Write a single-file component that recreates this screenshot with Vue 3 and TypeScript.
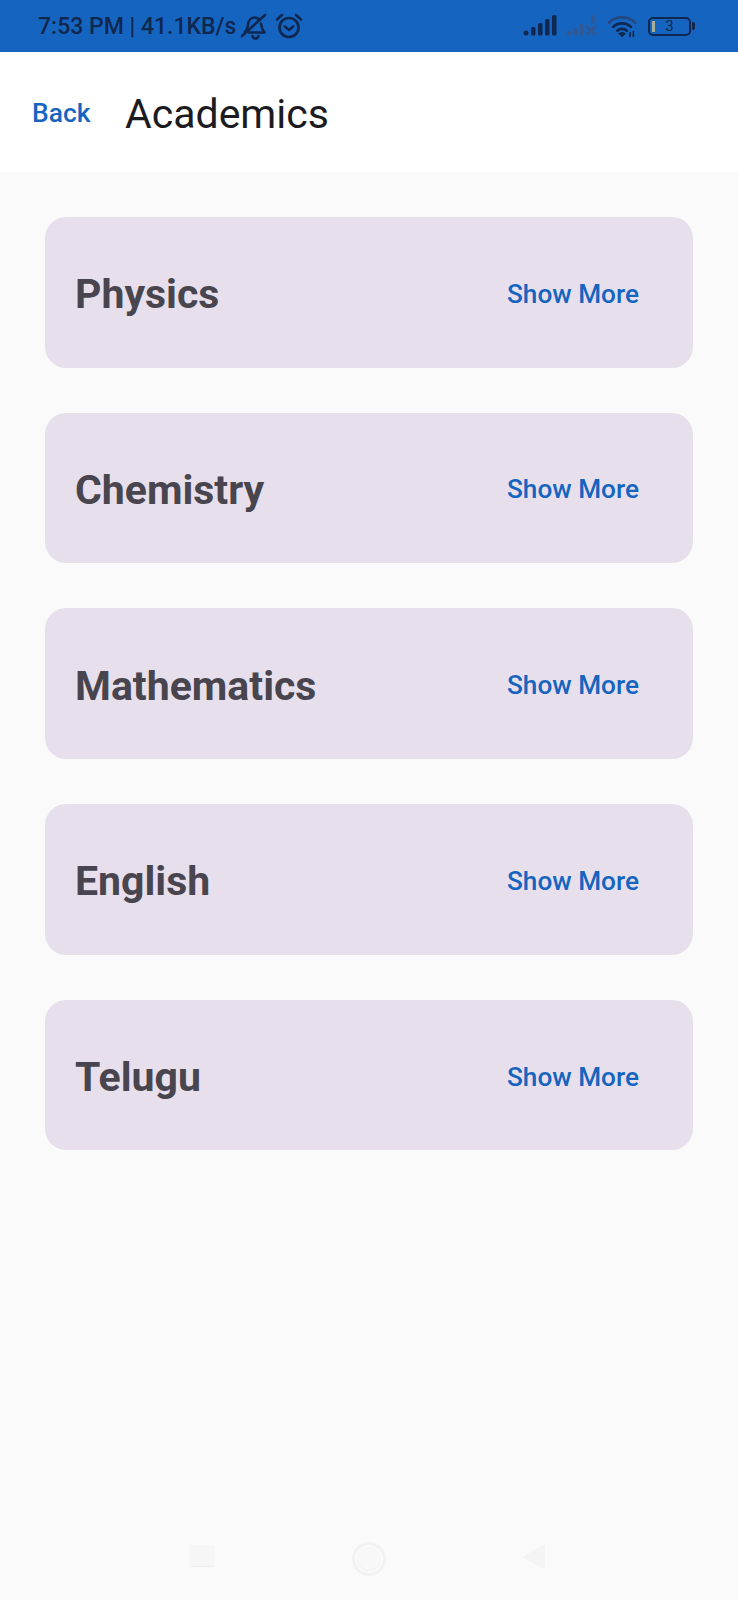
<script setup lang="ts">
const subjects: string[] = ['Physics', 'Chemistry', 'Mathematics', 'English', 'Telugu']
</script>

<template>
  <div class="screen">
    <div class="status">
      <div class="status-left">
        <span class="status-text">7:53 PM | 41.1KB/s</span>
        <svg class="ic-bell" width="28" height="28" viewBox="0 0 28 28" fill="none" stroke="#10274f" stroke-width="2.6" stroke-linecap="round" stroke-linejoin="round">
          <path d="M5 20c2-2 2.800-3.500 3-7 .3-4.500 3-7.500 6.500-7.500 2 0 3.500.8 4.600 2" />
          <path d="M21 11.500c.2 3.500 1.500 6.500 3.500 9H9" />
          <path d="M2 24 25 3" />
          <path d="M12.500 24c.5 1.600 1.500 2.500 3 2.500s2.500-.9 3-2.500" />
        </svg>
        <svg class="ic-alarm" width="28" height="28" viewBox="0 0 28 28" fill="none" stroke="#10274f" stroke-width="2.6" stroke-linecap="round" stroke-linejoin="round">
          <circle cx="14" cy="15.500" r="9.500" />
          <path d="M9.800 14.500 14 18l4.200-3.500" />
          <path d="M2 7.500 7 3" />
          <path d="M26 7.500 21 3" />
        </svg>
      </div>
      <div class="status-right">
        <svg width="34" height="22" viewBox="0 0 34 22" fill="#10274f">
          <circle cx="3" cy="18" r="2.500" />
          <rect x="8" y="12" width="4.500" height="8.500" rx="1.500" />
          <rect x="15" y="8" width="4.500" height="12.500" rx="1.500" />
          <rect x="22" y="4" width="4.500" height="16.500" rx="1.500" />
          <rect x="29" y="0" width="4.500" height="20.500" rx="1.500" />
        </svg>
        <svg width="32" height="22" viewBox="0 0 32 22" fill="#35578f">
          <circle cx="3" cy="18" r="2.300" />
          <rect x="8" y="13" width="3.500" height="7.500" rx="1.500" />
          <rect x="14" y="9" width="3.500" height="11.500" rx="1.500" />
          <rect x="25" y="0" width="3.500" height="8" rx="1.500" />
          <path d="m20 11 10 9m0-9-10 9" stroke="#35578f" stroke-width="2.500" fill="none" />
        </svg>
        <svg width="32" height="24" viewBox="0 0 34 24" fill="none" stroke="#10274f" stroke-width="2.800" stroke-linecap="round">
          <path d="M2 8.500C9.500 1 22.500 1 30 8.500" stroke="#25497f" />
          <path d="M6.500 13c5-5 14-5 19 0" />
          <path d="M11 17c2.800-2.500 7.200-2.500 10 0" />
          <path d="m12.500 20 3.500 3.500 3.500-3.500c-2-1.300-5-1.300-7 0Z" fill="#10274f" stroke-width="1" />
          <path d="M24.500 19v4M28 18v5" stroke-width="1.800" />
        </svg>
        <div class="battery">
          <span class="battery-fill"></span>
          <span class="battery-num">3</span>
        </div>
        <span class="battery-tip"></span>
      </div>
    </div>

    <header class="header">
      <span class="back">Back</span>
      <h1 class="title">Academics</h1>
    </header>

    <main class="list">
      <section v-for="s in subjects" :key="s" class="card">
        <span class="name">{{ s }}</span>
        <span class="more">Show More</span>
      </section>
    </main>

    <nav class="nav">
      <span class="nav-square"></span>
      <span class="nav-circle"><span class="nav-dot"></span></span>
      <span class="nav-tri"></span>
    </nav>
  </div>
</template>

<style>
html, body { margin: 0; background: #fafafa; }
</style>

<style scoped>
.screen {
  width: 738px;
  height: 1600px;
  background: #fafafa;
  display: flex;
  flex-direction: column;
  font-family: Roboto, "Liberation Sans", sans-serif;
  overflow: hidden;
}
.status {
  height: 52px;
  flex: none;
  background: #1565c0;
  display: flex;
  align-items: center;
  justify-content: space-between;
  padding: 0 43px 0 38px;
  box-sizing: border-box;
}
.status-left { display: flex; align-items: center; gap: 4px; }
.status-text { font-size: 23px; color: #10274f; font-weight: 500; }
.ic-alarm { margin-left: 3px; }
.status-right { display: flex; align-items: center; gap: 9px; }
.battery {
  width: 39px;
  height: 15px;
  border: 2.500px solid #10274f;
  border-radius: 5px;
  margin-left: 0;
  display: flex;
  align-items: center;
  justify-content: center;
  position: relative;
}
.battery-fill {
  position: absolute;
  left: 2px;
  top: 2px;
  bottom: 2px;
  width: 3px;
  background: #a9ad9a;
}
.battery-num { font-size: 15px; color: #10274f; line-height: 1; }
.battery-tip {
  width: 3px;
  height: 8px;
  background: #10274f;
  border-radius: 0 2px 2px 0;
  margin-left: -8px;
}
.header {
  height: 120px;
  flex: none;
  background: #fff;
  display: flex;
  align-items: center;
  padding: 2px 0 0 32px;
  box-sizing: border-box;
}
.back { font-size: 26.400px; font-weight: 500; color: #1565c0; width: 93px; }
.title { margin: 0; font-size: 41px; font-weight: 400; color: #1c1b1f; padding-top: 2px; }
.list {
  flex: 1;
  padding: 45px 45px 0;
  display: flex;
  flex-direction: column;
  gap: 45.200px;
}
.card {
  height: 150.500px;
  flex: none;
  background: #e7e0ec;
  border-radius: 21px;
  display: flex;
  align-items: center;
  justify-content: space-between;
  padding: 4px 54px 0 30px;
  box-sizing: border-box;
}
.name { font-size: 41px; font-weight: 700; color: #49454f; }
.more { font-size: 26.200px; font-weight: 500; color: #1565c0; padding-bottom: 1px; }
.nav {
  height: 75px;
  flex: none;
  display: flex;
  align-items: flex-start;
  padding-left: 190px;
}
.nav-square {
  width: 24px;
  height: 21px;
  margin: 20px 138px 0 0;
  background: #f6f6f6;
  box-shadow: 0 1px 1px #eeeeee;
}
.nav-circle {
  width: 28px;
  height: 28px;
  margin: 17px 136px 0 0;
  border: 3px solid #f2f2f2;
  border-radius: 50%;
  display: flex;
  align-items: center;
  justify-content: center;
}
.nav-dot { width: 24px; height: 24px; border-radius: 50%; background: #f8f8f8; border-bottom: 1px solid #eeeeee; box-sizing: border-box; }
.nav-tri {
  width: 0;
  height: 0;
  margin-top: 19px;
  border-top: 13px solid transparent;
  border-bottom: 13px solid transparent;
  border-right: 23px solid #f4f4f4;
}
</style>
